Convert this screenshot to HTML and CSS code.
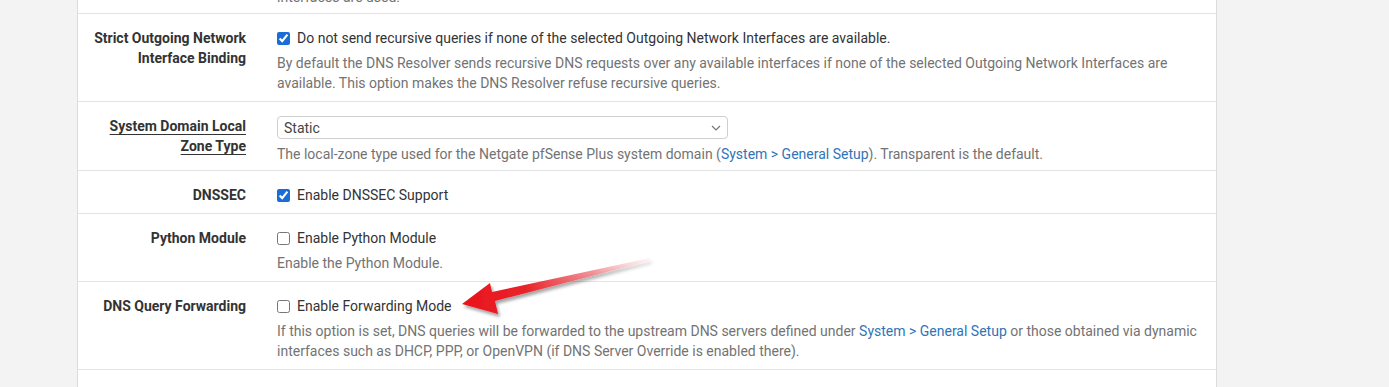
FILE: index.html
```html
<!DOCTYPE html>
<html lang="en">
<head>
    <meta charset="UTF-8">
    <title>DNS Resolver - General Settings</title>
    <link rel="stylesheet" href="styles.css">
</head>
<body>
    <div class="panel">

        <div class="form-row form-row-cut">
            <div class="form-label"></div>
            <div class="form-field">
                <div class="help">interfaces are used.</div>
            </div>
        </div>

        <div class="form-row">
            <div class="form-label">Strict Outgoing Network Interface Binding</div>
            <div class="form-field">
                <label class="check"><input type="checkbox" checked> Do not send recursive queries if none of the selected Outgoing Network Interfaces are available.</label>
                <div class="help">By default the DNS Resolver sends recursive DNS requests over any available interfaces if none of the selected Outgoing Network Interfaces are available. This option makes the DNS Resolver refuse recursive queries.</div>
            </div>
        </div>

        <div class="form-row form-row-select">
            <div class="form-label"><span class="label-link">System Domain Local Zone Type</span></div>
            <div class="form-field">
                <div class="select">
                    <span>Static</span>
                    <svg width="10" height="6" viewBox="0 0 10 6"><path d="M1 1 L5 5 L9 1" fill="none" stroke="#777" stroke-width="1.2"/></svg>
                </div>
                <div class="help">The local-zone type used for the Netgate pfSense Plus system domain (<a href="#">System &gt; General Setup</a>). Transparent is the default.</div>
            </div>
        </div>

        <div class="form-row">
            <div class="form-label">DNSSEC</div>
            <div class="form-field">
                <label class="check"><input type="checkbox" checked> Enable DNSSEC Support</label>
            </div>
        </div>

        <div class="form-row">
            <div class="form-label">Python Module</div>
            <div class="form-field">
                <label class="check"><input type="checkbox"> Enable Python Module</label>
                <div class="help">Enable the Python Module.</div>
            </div>
        </div>

        <div class="form-row">
            <div class="form-label">DNS Query Forwarding</div>
            <div class="form-field">
                <label class="check"><input type="checkbox"> Enable Forwarding Mode</label>
                <div class="help">If this option is set, DNS queries will be forwarded to the upstream DNS servers defined under <a href="#">System &gt; General Setup</a> or those obtained via dynamic interfaces such as DHCP, PPP, or OpenVPN (if DNS Server Override is enabled there).</div>
            </div>
        </div>

        <div class="form-row form-row-empty"></div>
    </div>

    <!-- annotation arrow pointing at the forwarding checkbox -->
    <svg class="arrow" width="230" height="80" viewBox="0 0 230 80">
        <defs>
            <linearGradient id="shaft" x1="20" y1="0" x2="210" y2="0" gradientUnits="userSpaceOnUse">
                <stop offset="0" stop-color="#e8141b"/>
                <stop offset="0.35" stop-color="#e8242a"/>
                <stop offset="0.7" stop-color="#f07a80" stop-opacity="0.8"/>
                <stop offset="1" stop-color="#fbd8da" stop-opacity="0.3"/>
            </linearGradient>
            <filter id="shadow" x="-10%" y="-20%" width="130%" height="160%">
                <feDropShadow dx="2" dy="3" stdDeviation="1.6" flood-color="#000" flood-opacity="0.35"/>
            </filter>
        </defs>
        <polygon filter="url(#shadow)" fill="url(#shaft)"
            points="22,58 50,37 52,46 210,12 210,15 55,55 58,68"/>
    </svg>
</body>
</html>
```

FILE: styles.css
```css
body {
    margin: 0;
    background: #f3f3f3;
    font-family: Roboto, "Liberation Sans", sans-serif;
    font-size: 14px;
    line-height: 20px;
    color: #333;
    overflow: hidden;
}
.panel {
    width: 1138px;
    margin: -13px 0 0 77px;
    background: white;
    border-left: 1px solid #dcdcdc;
    border-right: 1px solid #dcdcdc;
}
.form-row {
    display: grid;
    grid-template-columns: 183px 1fr;
    border-bottom: 1px solid #e3e3e3;
}
.form-row-cut .form-label,
.form-row-cut .form-field {
    padding-top: 0;
    padding-bottom: 6px;
}
.form-row-cut .help {
    margin-top: 0;
}
.form-row-select .form-field {
    padding-bottom: 6px;
}
.form-row-empty {
    height: 40px;
    border-bottom: none;
}
.form-label {
    padding: 14px 15px 8px 3px;
    text-align: right;
    font-weight: 700;
    color: #333;
}
.label-link {
    text-decoration: underline;
    text-decoration-thickness: 1px;
    text-underline-offset: 3px;
}
.form-field {
    padding: 14px 14px 8px 16px;
}
.check {
    display: flex;
    align-items: center;
    color: #333;
}
.check input {
    width: 13px;
    height: 13px;
    margin: 0 7px 0 0;
    accent-color: #1a6dd6;
}
.help {
    margin-top: 5px;
    color: #737373;
}
.help a {
    color: #2f74b8;
    text-decoration: none;
}
.select {
    display: flex;
    align-items: center;
    justify-content: space-between;
    width: 451px;
    height: 23px;
    padding: 0 6px;
    box-sizing: border-box;
    border: 1px solid #cfcfcf;
    border-radius: 4px;
    color: #444;
}
.arrow {
    position: absolute;
    left: 440px;
    top: 246px;
}
```
